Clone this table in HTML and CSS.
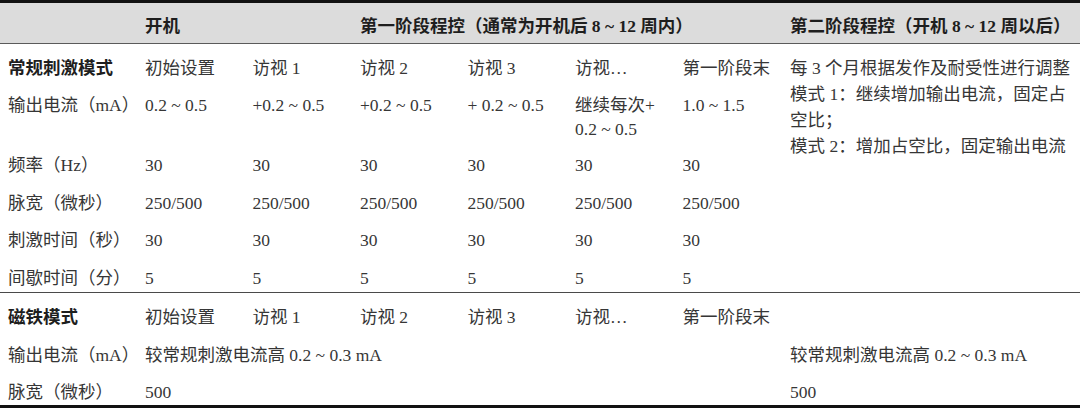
FILE: index.html
```html
<!DOCTYPE html>
<html lang="zh-CN">
<head>
<meta charset="utf-8">
<title>程控参数</title>
<link rel="stylesheet" href="styles.css">
</head>
<body>
<table class="spec">
  <colgroup>
    <col class="c-label">
    <col class="c-val"><col class="c-val"><col class="c-val">
    <col class="c-val"><col class="c-val"><col class="c-val">
    <col class="c-last">
  </colgroup>
  <thead>
    <tr>
      <th class="lbl"></th>
      <th colspan="2">开机</th>
      <th colspan="4">第一阶段程控（通常为开机后 8 ~ 12 周内）</th>
      <th>第二阶段程控（开机 8 ~ 12 周以后）</th>
    </tr>
  </thead>
  <tbody>
    <tr class="first">
      <td class="lbl strong">常规刺激模式</td>
      <td>初始设置</td><td>访视 1</td><td>访视 2</td><td>访视 3</td><td>访视…</td><td>第一阶段末</td>
      <td rowspan="6" class="notes">每 3 个月根据发作及耐受性进行调整<br>模式 1：继续增加输出电流，固定占<br>空比；<br>模式 2：增加占空比，固定输出电流</td>
    </tr>
    <tr class="tight">
      <td class="lbl">输出电流（mA）</td>
      <td>0.2 ~ 0.5</td><td>+0.2 ~ 0.5</td><td>+0.2 ~ 0.5</td><td>+ 0.2 ~ 0.5</td><td>继续每次+<br>0.2 ~ 0.5</td><td>1.0 ~ 1.5</td>
    </tr>
    <tr>
      <td class="lbl">频率（Hz）</td>
      <td>30</td><td>30</td><td>30</td><td>30</td><td>30</td><td>30</td>
    </tr>
    <tr>
      <td class="lbl">脉宽（微秒）</td>
      <td>250/500</td><td>250/500</td><td>250/500</td><td>250/500</td><td>250/500</td><td>250/500</td>
    </tr>
    <tr>
      <td class="lbl">刺激时间（秒）</td>
      <td>30</td><td>30</td><td>30</td><td>30</td><td>30</td><td>30</td>
    </tr>
    <tr class="last">
      <td class="lbl">间歇时间（分）</td>
      <td>5</td><td>5</td><td>5</td><td>5</td><td>5</td><td>5</td>
    </tr>
    <tr class="first sep">
      <td class="lbl strong">磁铁模式</td>
      <td>初始设置</td><td>访视 1</td><td>访视 2</td><td>访视 3</td><td>访视…</td><td>第一阶段末</td>
      <td></td>
    </tr>
    <tr>
      <td class="lbl">输出电流（mA）</td>
      <td colspan="6">较常规刺激电流高 0.2 ~ 0.3 mA</td>
      <td>较常规刺激电流高 0.2 ~ 0.3 mA</td>
    </tr>
    <tr class="end">
      <td class="lbl">脉宽（微秒）</td>
      <td colspan="6">500</td>
      <td>500</td>
    </tr>
  </tbody>
</table>
</body>
</html>
```
FILE: styles.css
```css
html, body {
  margin: 0;
  padding: 0;
  background: #ffffff;
}

.spec {
  width: 1080px;
  border-collapse: collapse;
  table-layout: fixed;
  font-family: "Liberation Serif", "Noto Sans CJK SC", serif;
  font-size: 17.5px;
  color: #363636;
  border-top: 3px solid #111111;
  border-bottom: 3px solid #111111;
}

.c-label { width: 145px; }
.c-val { width: 107.5px; }
.c-last { width: 290px; }

.spec th {
  background: #dcdcdc;
  color: #1e1e1e;
  font-weight: 700;
  text-align: left;
  white-space: nowrap;
  padding: 10px 0 4px;
  line-height: 26px;
  border-bottom: 1px solid #5a5a5a;
}

.spec td {
  text-align: left;
  vertical-align: top;
  white-space: nowrap;
  padding: 5.75px 0;
  line-height: 26px;
  font-weight: 400;
}

.spec .lbl {
  padding-left: 8px;
}

.spec td.strong {
  font-weight: 700;
  color: #1e1e1e;
}

.spec tr.tight td {
  line-height: 24px;
}

.spec tr.first td {
  padding-top: 11px;
}

.spec tr.last td {
  padding-bottom: 1.5px;
}

.spec tr.end td {
  padding-bottom: 0;
}

.spec tr.sep td {
  border-top: 1px solid #4a4a4a;
}

.spec td.notes {
  line-height: 26px;
  padding-top: 11px;
}
```
